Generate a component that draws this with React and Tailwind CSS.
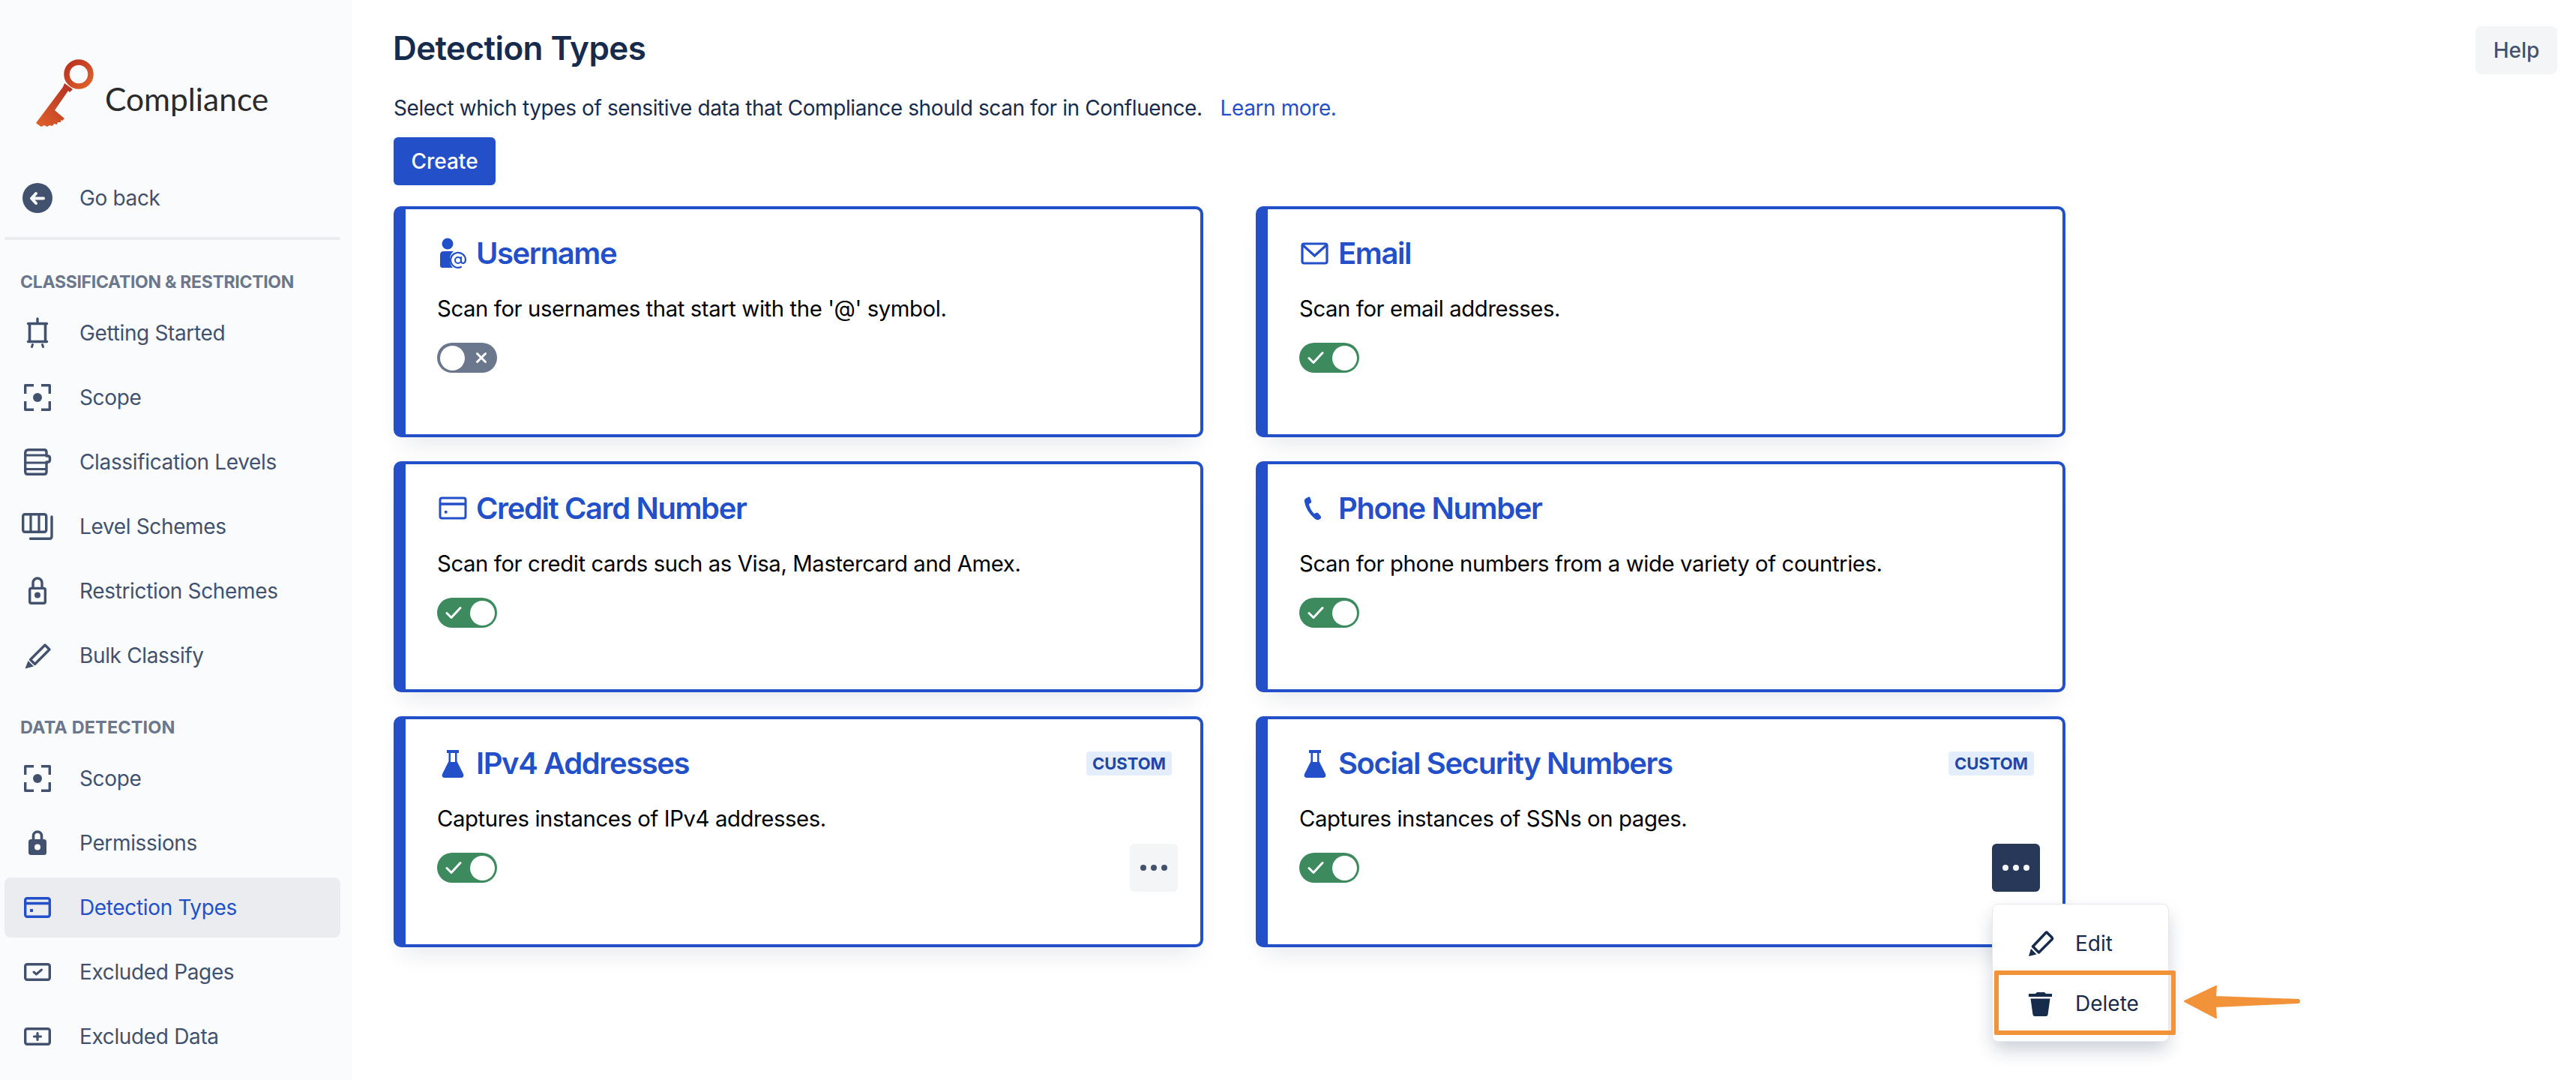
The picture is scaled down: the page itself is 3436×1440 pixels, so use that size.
import React from "react";

const Svg = ({ children, cls = "w-12 h-12" }) => (
  <svg viewBox="0 0 48 48" className={`${cls} shrink-0`} fill="none">{children}</svg>
);

const KeyLogo = () => (
  <svg viewBox="0 0 90 100" className="w-[90px] h-[100px] shrink-0">
    <defs>
      <linearGradient id="k1" x1="0" y1="0" x2="1" y2="1">
        <stop offset="0" stopColor="#B8301F" />
        <stop offset="1" stopColor="#E0622C" />
      </linearGradient>
      <linearGradient id="k2" x1="1" y1="0" x2="0" y2="1">
        <stop offset="0" stopColor="#B22E22" />
        <stop offset="1" stopColor="#E0622C" />
      </linearGradient>
    </defs>
    <circle cx="59" cy="21" r="16" fill="none" stroke="url(#k1)" strokeWidth="7.5" />
    <path d="M38 38 L40 33 L51 41 L47 45 L45 43 L27 69 L40 80 L37 83 L35 82 L35 85 L31 85 L30 88 L26 87 L24 90 L20 89 L17 91 L13 89 L9 91 L6 89 L2 86 Z" fill="url(#k2)" />
  </svg>
);

const C = "#42526E";
const Back = () => (
  <Svg>
    <circle cx="24" cy="24" r="20" fill={C} />
    <path d="M22 18 L16 24.5 L22 31 M17 24.5 H32" stroke="#FAFBFD" strokeWidth="4" strokeLinecap="round" strokeLinejoin="round" />
  </Svg>
);
const Presenter = () => (
  <Svg>
    <path d="M24 5 V10" stroke={C} strokeWidth="3.4" strokeLinecap="round" />
    <path d="M11.5 11.5 H36.5" stroke={C} strokeWidth="3.4" strokeLinecap="round" />
    <path d="M13.5 11.5 V35 M34.5 11.5 V35" stroke={C} strokeWidth="3.6" />
    <path d="M11.5 35.5 H36.5" stroke={C} strokeWidth="3.4" strokeLinecap="round" />
    <path d="M17.5 39.5 L16.5 42.5 M30.5 39.5 L31.5 42.5" stroke={C} strokeWidth="3" strokeLinecap="round" />
  </Svg>
);
const Scope = () => (
  <Svg>
    <path d="M19 7.7 H7.7 V19 M29 7.7 H40.3 V19 M7.7 29 V40.3 H19 M29 40.3 H40.3 V29" stroke={C} strokeWidth="3.4" strokeLinejoin="round" />
    <circle cx="24" cy="24" r="6" fill={C} />
  </Svg>
);
const Levels = () => (
  <Svg>
    <path d="M7.7 12 Q7.7 7.7 12 7.7 H33 Q36 7.7 36 11 V16 H38 Q40.5 16 40.5 19 V21 Q40.5 24 38 24 H36 V37 Q36 40.3 33 40.3 H11 Q7.7 40.3 7.7 37 Z" stroke={C} strokeWidth="3.4" strokeLinejoin="round" />
    <path d="M8 15 H36 M8 25 H38 M8 33.5 H36" stroke={C} strokeWidth="3.2" />
  </Svg>
);
const Board = () => (
  <Svg>
    <rect x="4.7" y="7.7" width="31" height="23.6" rx="2.5" stroke={C} strokeWidth="3.4" />
    <path d="M15 8 V31 M26 8 V31" stroke={C} strokeWidth="3.2" />
    <path d="M43 11 V37 Q43 40.3 40 40.3 H14.5" stroke={C} strokeWidth="3.4" strokeLinecap="round" />
  </Svg>
);
const LockOutline = () => (
  <Svg>
    <rect x="13.7" y="20.4" width="20.6" height="19.9" rx="2" stroke={C} strokeWidth="3.4" />
    <path d="M18 20 V13 A6 6 0 0 1 30 13 V20" stroke={C} strokeWidth="3.4" />
    <circle cx="24" cy="29.5" r="4" fill={C} />
  </Svg>
);
const Pencil = () => (
  <Svg>
    <path d="M34 10 L40 16 L20.5 35.5 L14.5 29.5 Z" stroke={C} strokeWidth="3.4" strokeLinejoin="round" />
    <path d="M11.5 31 L19 38.5 L7.5 41.5 Z" fill={C} />
  </Svg>
);
const LockFilled = () => (
  <Svg>
    <path d="M18.5 22 V14.5 A5.5 5.5 0 0 1 29.5 14.5 V22" stroke={C} strokeWidth="3.6" />
    <rect x="12" y="19" width="24" height="21" rx="3.5" fill={C} />
    <circle cx="24" cy="29.5" r="4" fill="#FAFBFD" />
  </Svg>
);
const Card = ({ color = C }) => (
  <Svg>
    <rect x="7.7" y="11.7" width="32.6" height="24.6" rx="2.5" stroke={color} strokeWidth="3.4" />
    <path d="M8 18.5 H40" stroke={color} strokeWidth="3.6" />
    <rect x="14" y="26" width="4" height="4" fill={color} />
  </Svg>
);
const RectCheck = () => (
  <Svg>
    <rect x="7.7" y="13.7" width="32.6" height="20.6" rx="2.5" stroke={C} strokeWidth="3.4" />
    <path d="M19 24 L22.5 27 L29.5 21" stroke={C} strokeWidth="3" strokeLinecap="round" strokeLinejoin="round" />
  </Svg>
);
const RectPlus = () => (
  <Svg>
    <rect x="7.7" y="13.7" width="32.6" height="20.6" rx="2.5" stroke={C} strokeWidth="3.4" />
    <path d="M24 19.5 V28.5 M19.5 24 H28.5" stroke={C} strokeWidth="3.2" strokeLinecap="round" />
  </Svg>
);

const TitleSvg = ({ children }) => (
  <svg viewBox="0 0 44 44" className="w-[44px] h-[44px] shrink-0" fill="none">{children}</svg>
);
const BLUE = "#2350C8";
const UserAt = () => (
  <TitleSvg>
    <circle cx="15" cy="9" r="7.5" fill={BLUE} />
    <path d="M5 24 Q5 19 10 19 H23 Q18 23 18 30 Q18 37 22 41 H8 Q5 41 5 38 Z" fill={BLUE} />
    <circle cx="29" cy="31" r="4" stroke={BLUE} strokeWidth="2" />
    <path d="M33 27 V32 Q33 35 36 35 Q39 34 39 30 A10 10 0 1 0 33 40" stroke={BLUE} strokeWidth="2.2" strokeLinecap="round" />
  </TitleSvg>
);
const Mail = () => (
  <TitleSvg>
    <rect x="5" y="9" width="33" height="26" rx="2.5" stroke={BLUE} strokeWidth="3.2" />
    <path d="M6 11 L21.5 25 L37 11" stroke={BLUE} strokeWidth="3.2" />
  </TitleSvg>
);
const CardT = () => (
  <TitleSvg>
    <rect x="5" y="8" width="34" height="27" rx="2.5" stroke={BLUE} strokeWidth="3" />
    <path d="M5 16 H39" stroke={BLUE} strokeWidth="3.4" />
    <rect x="11" y="25" width="3.5" height="3.5" fill={BLUE} />
  </TitleSvg>
);
const Phone = () => (
  <TitleSvg>
    <path d="M13.5 6.5 L9 9 Q7.5 10 8 13 Q10 25 21 35 Q24.5 38 27 37 L29.5 35.5 Q31 34 29.5 32 L26 28 Q25 27 23 28 L21 29 Q15 23 14 16 L16.5 14.5 Q17.5 13.5 17 12 L15.5 7.5 Q15 6 13.5 6.5 Z" fill={BLUE} />
  </TitleSvg>
);
const Flask = () => (
  <TitleSvg>
    <path d="M14 4 H30 V8 H27.5 V19 L36 36 Q37.5 40.5 33 41 H11 Q6.5 40.5 8 36 L16.5 19 V8 H14 Z" fill={BLUE} />
    <rect x="19" y="8" width="6" height="12" fill="#fff" />
  </TitleSvg>
);

const Toggle = ({ on = true }) =>
  on ? (
    <div className="flex items-center w-[80px] h-[40px] rounded-full bg-[#3D8A5E] pl-[11px] pr-[3px] justify-between">
      <svg viewBox="0 0 22 22" className="w-[22px] h-[22px]" fill="none"><path d="M2 11.5 L8 17.5 L20 4.5" stroke="#fff" strokeWidth="3" strokeLinecap="round" strokeLinejoin="round" /></svg>
      <div className="w-[33px] h-[33px] rounded-full bg-white" />
    </div>
  ) : (
    <div className="flex items-center w-[80px] h-[40px] rounded-full bg-[#6B778C] pl-[4px] pr-[12px] justify-between">
      <div className="w-[33px] h-[33px] rounded-full bg-white" />
      <svg viewBox="0 0 18 18" className="w-[18px] h-[18px]" fill="none"><path d="M3.5 3.5 L14.5 14.5 M14.5 3.5 L3.5 14.5" stroke="#fff" strokeWidth="3" strokeLinecap="round" /></svg>
    </div>
  );

const Dots = ({ color }) => (
  <svg viewBox="0 0 40 12" className="w-[40px] h-[12px]"><circle cx="6" cy="6" r="4" fill={color} /><circle cx="20" cy="6" r="4" fill={color} /><circle cx="34" cy="6" r="4" fill={color} /></svg>
);

const NavItem = ({ icon, label, active }) => (
  <div className={`flex items-center h-[80px] w-[448px] ml-[6px] pl-[20px] rounded-[8px] ${active ? "bg-[#EBECF0]" : ""}`}>
    <div className="w-[48px] flex justify-center">{icon}</div>
    <span className={`ml-[32px] text-[28px] tracking-[-0.35px] ${active ? "text-[#2350C8]" : "text-[#42526E]"}`}>{label}</span>
  </div>
);

const SectionLabel = ({ children, wide }) => (
  <div className={`h-[56px] flex items-center pl-[27px] mt-[28px] font-bold text-[#6B778C] whitespace-nowrap ${wide ? "text-[23.5px] tracking-[0.1px]" : "text-[23px] tracking-[-0.3px]"}`}>{children}</div>
);

const DetectionCard = ({ icon, title, desc, on = true, custom, menuBtn, children }) => (
  <div className="relative h-[308px] rounded-[10px] border-[4px] border-l-[16px] border-[#2350C8] pt-[31px] pl-[42px] pr-[30px] shadow-[0_20px_30px_-12px_rgba(9,30,66,0.10)] bg-white">
    <div className="flex items-center h-[56px]">
      <div className="w-[53px] -ml-[1px] flex">{icon}</div>
      <span className="text-[40px] font-semibold text-[#2350C8] tracking-[-1.4px]">{title}</span>
      {custom && (
        <span className="ml-auto mr-[8px] flex items-center justify-center w-[114px] h-[32px] rounded-[4px] bg-[#E4EDFC] text-[22px] font-bold text-[#1D47A8]">CUSTOM</span>
      )}
    </div>
    <div className="mt-[24px] h-[44px] flex items-center text-[29.3px] tracking-[-0.4px] text-black">{desc}</div>
    <div className="mt-[11px] h-[64px] flex items-center justify-between">
      <Toggle on={on} />
      {custom && (
        <div className={`w-[64px] h-[64px] rounded-[6px] flex items-center justify-center ${menuBtn === "dark" ? "bg-[#283858]" : "bg-[#F4F5F7]"}`}>
          <Dots color={menuBtn === "dark" ? "#F4F5F7" : "#42526E"} />
        </div>
      )}
    </div>
    {children}
  </div>
);

const Trash = () => (
  <svg viewBox="0 0 36 36" className="w-[36px] h-[36px] shrink-0" fill="none">
    <path d="M13 3 H23 L25 5 H33 V9 H2 V5 H11 Z" fill="#172B4D" />
    <path d="M4.5 11.5 H30.5 L27.5 33 Q27 35 25 35 H10 Q8 35 7.5 33 Z" fill="#172B4D" />
  </svg>
);

const Menu = () => (
  <div className="absolute left-[966px] top-[246px] w-[236px] h-[184px] rounded-[8px] bg-white border border-[#E6E8EE] shadow-[0_12px_24px_-2px_rgba(9,30,66,0.22)] z-10">
    <div className="flex items-center h-[80px] mt-[12px] pl-[46px] text-[28px] text-[#172B4D]">
      <div className="w-[36px] h-[36px] shrink-0 flex items-center justify-center">
        <svg viewBox="0 0 36 36" className="w-[36px] h-[36px]" fill="none">
          <path d="M26 3 L33 10 Q34 11.5 33 12.5 L15.5 30 L7.5 22 L24.5 4 Q25 3 26 3 Z" stroke="#172B4D" strokeWidth="3.5" strokeLinejoin="round" />
          <path d="M5 25 L12.5 32.5 L2 35 Z" fill="#172B4D" />
        </svg>
      </div>
      <span className="ml-[28px]">Edit</span>
    </div>
    <div className="flex items-center h-[80px] pl-[46px] text-[28px] text-[#172B4D]">
      <Trash />
      <span className="ml-[28px]">Delete</span>
    </div>
    <div className="absolute left-[2px] top-[88px] w-[242px] h-[86px] border-[6px] border-[#F29339] rounded-[2px]" />
    <svg viewBox="0 0 160 46" className="absolute left-[254px] top-[107px] w-[160px] h-[46px]">
      <path d="M2 22 L44 2 L43 16 L154 20 Q156 22 154 24 L43 29 L44 44 Z" fill="#F29339" stroke="#F29339" strokeWidth="2" strokeLinejoin="round" />
    </svg>
  </div>
);

export default function App() {
  return (
    <div className="flex w-[3436px] h-[1440px] overflow-hidden bg-white font-['Inter',sans-serif]">
      <aside className="w-[470px] h-[1440px] shrink-0 bg-[#FAFBFD] flex flex-col">
        <div className="h-[224px] flex items-start pt-[78px] pl-[46px]">
          <KeyLogo />
          <span className="ml-[4px] mt-[29px] font-['Lato',sans-serif] text-[42.5px] text-[#2B2B2B] leading-[50px]">Compliance</span>
        </div>
        <NavItem icon={<Back />} label="Go back" />
        <div className="h-[4px] w-[448px] ml-[6px] mt-[12px] bg-[#EBECF0] rounded-full" />
        <SectionLabel>CLASSIFICATION &amp; RESTRICTION</SectionLabel>
        <div className="flex flex-col gap-[6px]">
          <NavItem icon={<Presenter />} label="Getting Started" />
          <NavItem icon={<Scope />} label="Scope" />
          <NavItem icon={<Levels />} label="Classification Levels" />
          <NavItem icon={<Board />} label="Level Schemes" />
          <NavItem icon={<LockOutline />} label="Restriction Schemes" />
          <NavItem icon={<Pencil />} label="Bulk Classify" />
        </div>
        <SectionLabel wide>DATA DETECTION</SectionLabel>
        <div className="flex flex-col gap-[6px]">
          <NavItem icon={<Scope />} label="Scope" />
          <NavItem icon={<LockFilled />} label="Permissions" />
          <NavItem icon={<Card color="#2350C8" />} label="Detection Types" active />
          <NavItem icon={<RectCheck />} label="Excluded Pages" />
          <NavItem icon={<RectPlus />} label="Excluded Data" />
        </div>
      </aside>
      <main className="relative flex-1 pl-[55px]">
        <h1 className="pt-[36px] h-[100px] text-[44px] leading-[56px] font-semibold text-[#172B4D] tracking-[-0.6px] -ml-[1px]">Detection Types</h1>
        <p className="mt-[22px] h-[44px] flex items-center text-[28px] tracking-[-0.4px] text-[#172B4D]">
          Select which types of sensitive data that Compliance should scan for in Confluence.
          <span className="ml-[24px] text-[#2350C8]">Learn more.</span>
        </p>
        <button className="block mt-[17px] w-[136px] h-[64px] rounded-[6px] bg-[#2350C8] text-white text-[28px] font-medium">Create</button>
        <div className="mt-[28px] grid grid-cols-[1080px_1080px] auto-rows-[308px] gap-x-[70px] gap-y-[32px]">
          <DetectionCard icon={<UserAt />} title="Username" desc="Scan for usernames that start with the '@' symbol." on={false} />
          <DetectionCard icon={<Mail />} title="Email" desc="Scan for email addresses." />
          <DetectionCard icon={<CardT />} title="Credit Card Number" desc="Scan for credit cards such as Visa, Mastercard and Amex." />
          <DetectionCard icon={<Phone />} title="Phone Number" desc="Scan for phone numbers from a wide variety of countries." />
          <DetectionCard icon={<Flask />} title="IPv4 Addresses" desc="Captures instances of IPv4 addresses." custom menuBtn="light" />
          <DetectionCard icon={<Flask />} title="Social Security Numbers" desc="Captures instances of SSNs on pages." custom menuBtn="dark">
            <Menu />
          </DetectionCard>
        </div>
        <button className="absolute right-[25px] top-[35px] w-[109px] h-[64px] rounded-[8px] bg-[#F4F5F7] text-[#42526E] text-[28px] font-medium">Help</button>
      </main>
    </div>
  );
}
